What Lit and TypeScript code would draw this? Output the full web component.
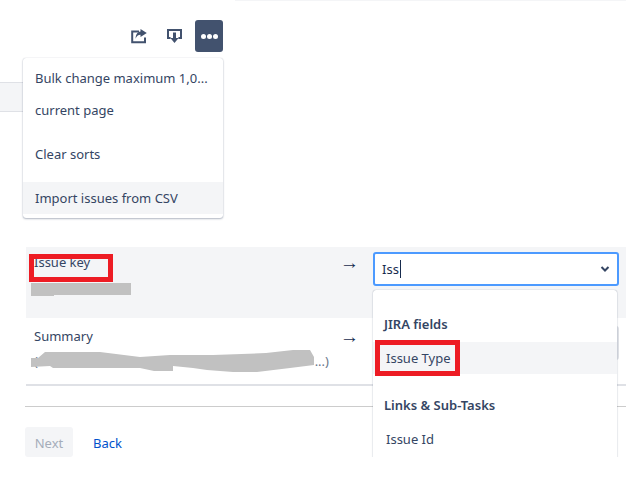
import { LitElement, html, css } from "lit";
import { customElement } from "lit/decorators.js";

@customElement("app-root")
export class AppRoot extends LitElement {
  static styles = css`
    :host {
      display: block;
      position: relative;
      width: 626px;
      height: 501px;
      overflow: hidden;
      background: #fff;
      font-family: "Noto Sans", "Open Sans", sans-serif;
      font-size: 13px;
      line-height: 20px;
      color: #172b4d;
    }
    .clip { height: 457px; overflow: hidden; position: relative; }
    .hair { height: 1px; margin-left: 235px; background: #f4f5f7; }
    .toolbar {
      display: flex;
      justify-content: flex-end;
      align-items: center;
      height: 32px;
      margin-top: 19px;
      padding-right: 403px;
    }
    .tool { display: block; color: #42526e; }
    .tool.share { margin-right: 18px; }
    .tool.down { margin-right: 12px; }
    .more {
      width: 28px;
      height: 32px;
      border-radius: 3px;
      background: #42526e;
      display: flex;
      align-items: center;
      justify-content: center;
      gap: 1px;
    }
    .more i { width: 5px; height: 5px; border-radius: 50%; background: #fff; }
    .band {
      height: 30px;
      margin-top: 30px;
      background: #f4f5f7;
      border-top: 1px solid #dfe1e6;
      border-bottom: 1px solid #dfe1e6;
      box-sizing: border-box;
      width: 30px;
    }
    .mapping { margin: 135px 0 0 26px; }
    .row {
      display: grid;
      grid-template-columns: 306px 33px 246px;
      box-sizing: border-box;
      padding-left: 8px;
    }
    .row.first { height: 71px; background: #f4f5f7; padding-top: 5px; }
    .row.second { height: 68px; padding-top: 8px; border-bottom: 2px solid #dfe1e6; }
    .lbl { color: #344563; line-height: 20px; }
    .sub {
      display: flex;
      justify-content: space-between;
      width: 295px;
      color: #6b778c;
      margin-top: 7px;
      line-height: 16px;
    }
    .arrow { font-family: "Liberation Sans", sans-serif; color: #172b4d; font-size: 19px; line-height: 20px; padding-top: 1px; }
    .select {
      height: 34px;
      box-sizing: border-box;
      background: #fff;
      border: 2px solid #4c9aff;
      border-radius: 3px;
      display: flex;
      align-items: center;
      padding: 0 6px 0 7px;
      color: #172b4d;
    }
    .caret { width: 1px; height: 18px; background: #172b4d; margin-left: 1px; }
    .chev { margin-left: auto; display: block; }
    .select.idle { background: #f4f5f7; border-color: #dfe1e6; }
    .rule { height: 1px; background: #ccc; margin: 20px 0 0 25px; }
    .actions { display: flex; align-items: center; margin: 20px 0 0 25px; gap: 20px; }
    .next {
      width: 48px;
      height: 30px;
      padding-top: 2px;
      box-sizing: border-box;
      background: #f4f5f7;
      border-radius: 3px;
      color: #a5adba;
      display: flex;
      align-items: center;
      justify-content: center;
    }
    .back { color: #0052cc; padding-top: 2px; }
    .menu {
      position: absolute;
      left: 23px;
      top: 58px;
      width: 200px;
      height: 160px;
      box-sizing: border-box;
      background: #fff;
      border-radius: 3px;
      box-shadow: 0 1px 2px rgba(9, 30, 66, 0.3), 0 0 1px rgba(9, 30, 66, 0.25);
      padding-top: 4px;
      color: #344563;
    }
    .mi { padding: 0 12px; height: 32px; line-height: 32px; white-space: nowrap; }
    .mi.gap { margin-top: 12px; }
    .mi.on { background: #f4f5f7; }
    .drop {
      position: absolute;
      left: 373px;
      top: 290px;
      width: 244px;
      height: 180px;
      box-sizing: border-box;
      background: #fff;
      border-radius: 3px;
      box-shadow: 0 0 1px rgba(9, 30, 66, 0.45), 0 1px 2px rgba(9, 30, 66, 0.15);
      padding-top: 24px;
      color: #344563;
    }
    .dh { font-weight: 600; padding: 0 11px; height: 20px; line-height: 20px; color: #344563; }
    .di { padding: 0 13px; height: 32px; line-height: 32px; }
    .di.on { background: #f4f5f7; margin-top: 8px; }
    .dh.second { margin-top: 21px; }
    .di.last { margin-top: 8px; }
    .mark {
      position: absolute;
      box-sizing: border-box;
      border: 5px solid #ed1c24;
      background: transparent;
    }
    .m1 { left: 29px; top: 254px; width: 84px; height: 28px; }
    .m2 { left: 375px; top: 340px; width: 85px; height: 36px; }
    .scrib { position: absolute; left: 0; top: 0; display: block; }
  `;

  render() {
    return html`
      <div class="clip">
        <div class="hair"></div>
        <div class="toolbar">
          <svg class="tool share" width="18" height="16" viewBox="0 0 18 16" fill="none">
            <path d="M9 3.5H2.2V14.2H15V9.5" stroke="currentColor" stroke-width="2"/>
            <path d="M10.5 1l6.3 4-6.3 4V6.8C8 6.8 6.6 8 5.6 10.8 5.6 6.6 7.4 3.6 10.5 3.4z" fill="currentColor"/>
          </svg>
          <svg class="tool down" width="17" height="16" viewBox="0 0 17 16" fill="none">
            <path d="M4.6 10H2V2h13v8h-2.6" stroke="currentColor" stroke-width="2"/>
            <path d="M7 4.5h3V10h2.6l-4.1 5L4.4 10H7z" fill="currentColor"/>
          </svg>
          <div class="more"><i></i><i></i><i></i></div>
        </div>
        <div class="band"></div>
        <div class="mapping">
          <div class="row first">
            <div class="lbl">Issue key</div>
            <div class="arrow">→</div>
            <div class="select">
              <span>Iss</span><span class="caret"></span>
              <svg class="chev" width="12" height="8" viewBox="0 0 12 8" fill="none">
                <path d="M2.5 2l3.5 3.5L9.500 2" stroke="#344563" stroke-width="2"/>
              </svg>
            </div>
          </div>
          <div class="row second">
            <div>
              <div class="lbl">Summary</div>
              <div class="sub"><span>(</span><span>...)</span></div>
            </div>
            <div class="arrow">→</div>
            <div class="select idle"></div>
          </div>
        </div>
        <div class="rule"></div>
        <div class="actions">
          <div class="next">Next</div>
          <div class="back">Back</div>
        </div>
        <div class="drop">
          <div class="dh">JIRA fields</div>
          <div class="di on">Issue Type</div>
          <div class="dh second">Links &amp; Sub-Tasks</div>
          <div class="di last">Issue Id</div>
        </div>
      </div>
      <div class="menu">
        <div class="mi">Bulk change maximum 1,0...</div>
        <div class="mi">current page</div>
        <div class="mi gap">Clear sorts</div>
        <div class="mi gap on">Import issues from CSV</div>
      </div>
      <svg class="scrib" width="626" height="501" viewBox="0 0 626 501" fill="#c1c1c1">
        <path d="M31 283H131V295H54V296H31z"/>
        <path d="M31 358H38L45 352H100L140 357L170 355H213L266 353L293 350H310L314 357V365L290 368L257 372H233L207 370L193 368L173 366V371H154L140 368H53L50 366L31 367z"/>
      </svg>
      <div class="mark m1"></div>
      <div class="mark m2"></div>
    `;
  }
}
